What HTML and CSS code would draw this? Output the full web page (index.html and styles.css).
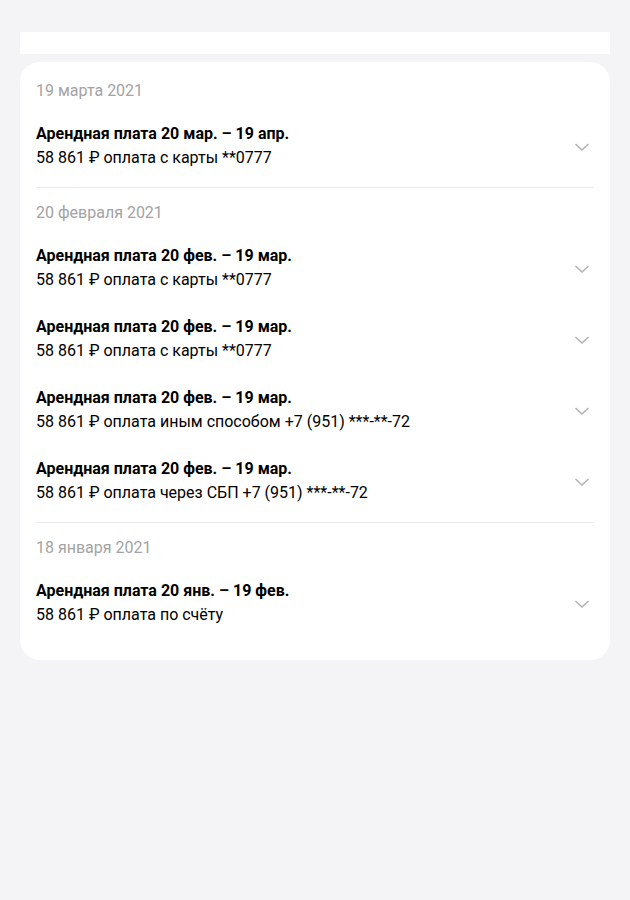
FILE: index.html
```html
<!DOCTYPE html>
<html lang="ru">
<head>
<meta charset="utf-8">
<link rel="stylesheet" href="styles.css">
</head>
<body>
<div class="page">
  <div class="topbar"></div>
  <div class="card">
    <section class="group">
      <div class="date">19 марта 2021</div>
      <div class="item">
        <div class="text">
          <div class="title">Арендная плата 20 мар. – 19 апр.</div>
          <div class="sub">58 861 ₽ оплата с карты **0777</div>
        </div>
        <svg class="chev" width="16" height="10" viewBox="0 0 16 10"><path d="M1.5 2 L8 8 L14.5 2" fill="none" stroke="#b3b3b3" stroke-width="1.6"/></svg>
      </div>
    </section>
    <section class="group">
      <div class="date">20 февраля 2021</div>
      <div class="item">
        <div class="text">
          <div class="title">Арендная плата 20 фев. – 19 мар.</div>
          <div class="sub">58 861 ₽ оплата с карты **0777</div>
        </div>
        <svg class="chev" width="16" height="10" viewBox="0 0 16 10"><path d="M1.5 2 L8 8 L14.5 2" fill="none" stroke="#b3b3b3" stroke-width="1.6"/></svg>
      </div>
      <div class="item">
        <div class="text">
          <div class="title">Арендная плата 20 фев. – 19 мар.</div>
          <div class="sub">58 861 ₽ оплата с карты **0777</div>
        </div>
        <svg class="chev" width="16" height="10" viewBox="0 0 16 10"><path d="M1.5 2 L8 8 L14.5 2" fill="none" stroke="#b3b3b3" stroke-width="1.6"/></svg>
      </div>
      <div class="item">
        <div class="text">
          <div class="title">Арендная плата 20 фев. – 19 мар.</div>
          <div class="sub">58 861 ₽ оплата иным способом +7 (951) ***-**-72</div>
        </div>
        <svg class="chev" width="16" height="10" viewBox="0 0 16 10"><path d="M1.5 2 L8 8 L14.5 2" fill="none" stroke="#b3b3b3" stroke-width="1.6"/></svg>
      </div>
      <div class="item">
        <div class="text">
          <div class="title">Арендная плата 20 фев. – 19 мар.</div>
          <div class="sub">58 861 ₽ оплата через СБП +7 (951) ***-**-72</div>
        </div>
        <svg class="chev" width="16" height="10" viewBox="0 0 16 10"><path d="M1.5 2 L8 8 L14.5 2" fill="none" stroke="#b3b3b3" stroke-width="1.6"/></svg>
      </div>
    </section>
    <section class="group">
      <div class="date">18 января 2021</div>
      <div class="item">
        <div class="text">
          <div class="title">Арендная плата 20 янв. – 19 фев.</div>
          <div class="sub">58 861 ₽ оплата по счёту</div>
        </div>
        <svg class="chev" width="16" height="10" viewBox="0 0 16 10"><path d="M1.5 2 L8 8 L14.5 2" fill="none" stroke="#b3b3b3" stroke-width="1.6"/></svg>
      </div>
    </section>
  </div>
</div>
</body>
</html>
```

FILE: styles.css
```css
html, body {
  margin: 0;
  padding: 0;
  background: #f4f4f6;
}
body {
  font-family: Roboto, "Noto Sans", sans-serif;
  color: #000;
  font-size: 16px;
  line-height: 24px;
}
.page {
  padding: 32px 20px;
  display: flex;
  flex-direction: column;
  gap: 8px;
}
.topbar {
  height: 22px;
  background: #fff;
}
.card {
  background: #fff;
  border-radius: 20px;
  padding: 17px 16px 15px;
}
.group {
  padding: 13px 0 6px;
  border-bottom: 1px solid #ebebeb;
}
.group:first-child {
  padding-top: 0;
}
.group:last-child {
  border-bottom: none;
  padding-bottom: 7px;
}
.date {
  color: #a3a3a3;
  margin-bottom: 7px;
}
.item {
  display: flex;
  align-items: center;
  justify-content: space-between;
  padding: 12px 0 11px;
}
.title {
  font-weight: 700;
}
.chev {
  margin: 2px 4px 0 0;
  flex: none;
}
```
